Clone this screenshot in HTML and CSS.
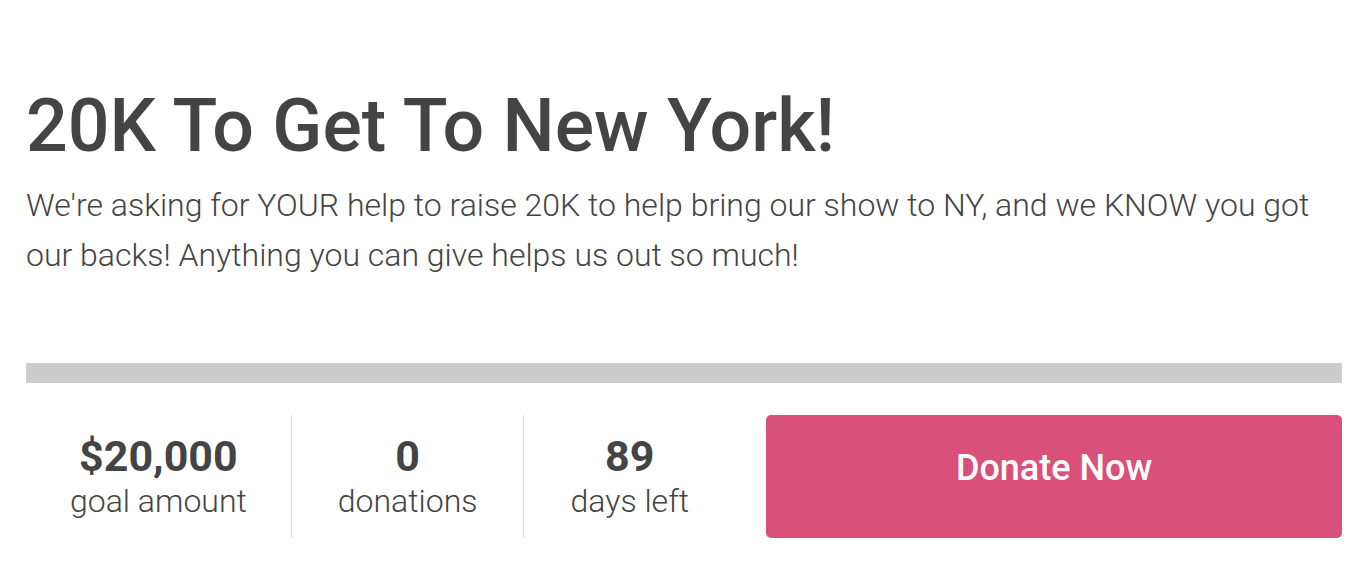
FILE: index.html
```html
<!DOCTYPE html>
<html>
<head>
<meta charset="utf-8">
<link rel="stylesheet" href="styles.css">
</head>
<body>
<main class="campaign">
  <h1 class="title">20K To Get To New York!</h1>
  <p class="desc">We're asking for YOUR help to raise 20K to help bring our show to NY, and we KNOW you got our backs! Anything you can give helps us out so much!</p>
  <div class="progress"><div class="progress-fill" style="width:0%"></div></div>
  <div class="stats">
    <div class="stat">
      <div class="num">$20,000</div>
      <div class="label">goal amount</div>
    </div>
    <div class="stat">
      <div class="num">0</div>
      <div class="label">donations</div>
    </div>
    <div class="stat last">
      <div class="num">89</div>
      <div class="label">days left</div>
    </div>
    <a class="donate" href="#">Donate Now</a>
  </div>
</main>
</body>
</html>
```
FILE: styles.css
```css
* { box-sizing: border-box; }
html, body { margin: 0; padding: 0; background: #fff; }
body { font-family: Roboto, "Liberation Sans", sans-serif; color: #444; }
.campaign { padding: 81px 24px 0 26px; }
.title { margin: 0; font-size: 73.5px; font-weight: 500; line-height: 90px; color: #444; }
.desc { margin: 9px 0 0; font-size: 32px; font-weight: 300; line-height: 50px; color: #444; }
.progress { margin-top: 83px; height: 20px; background: #ccc; }
.progress-fill { height: 100%; background: #d9507a; }
.stats { display: flex; margin-top: 32px; height: 123px; }
.stat { display: flex; flex-direction: column; align-items: center; justify-content: center; padding: 6px 46px 0; border-right: 1px solid #ddd; }
.stat:first-child { padding-left: 44px; padding-right: 44px; }
.stat.last { border-right: none; padding-right: 45px; }
.num { font-size: 43px; font-weight: 700; line-height: 42px; }
.label { font-size: 32px; font-weight: 300; line-height: 48px; }
.donate { flex: 1; margin-left: 32px; display: flex; align-items: center; justify-content: center; padding-bottom: 17px; background: #d9507a; color: #fff; border-radius: 5px; text-decoration: none; font-size: 36px; font-weight: 500; }
```
